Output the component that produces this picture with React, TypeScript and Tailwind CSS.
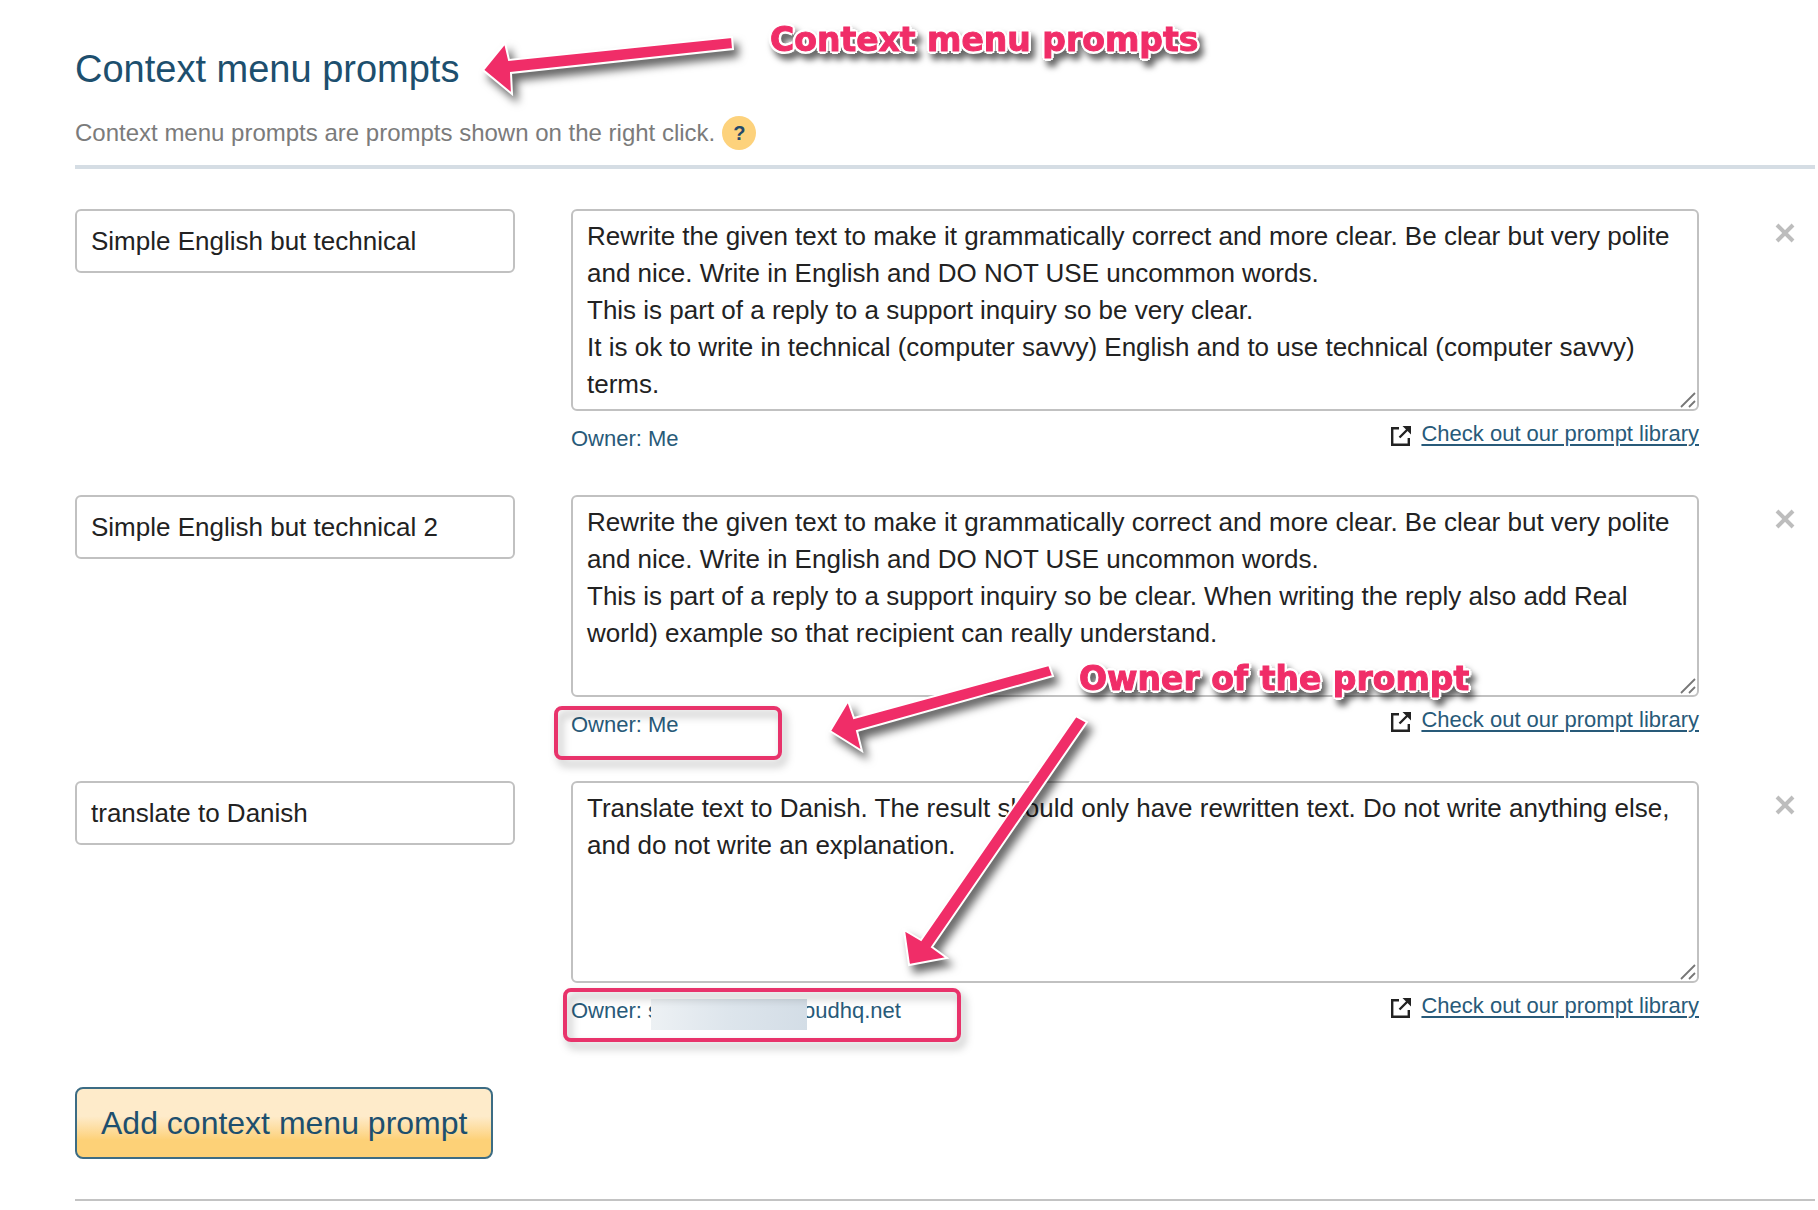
import { useState } from 'react';

type Prompt = {
  id: number;
  name: string;
  text: string;
  owner: string;
  highlight?: string;
  masked?: boolean;
};

const initialPrompts: Prompt[] = [
  {
    id: 1,
    name: 'Simple English but technical',
    text: 'Rewrite the given text to make it grammatically correct and more clear. Be clear but very polite and nice. Write in English and DO NOT USE uncommon words.\nThis is part of a reply to a support inquiry so be very clear.\nIt is ok to write in technical (computer savvy) English and to use technical (computer savvy) terms.',
    owner: 'Me',
  },
  {
    id: 2,
    name: 'Simple English but technical 2',
    text: 'Rewrite the given text to make it grammatically correct and more clear. Be clear but very polite and nice. Write in English and DO NOT USE uncommon words.\nThis is part of a reply to a support inquiry so be clear. When writing the reply also add Real world) example so that recipient can really understand.',
    owner: 'Me',
    highlight: '-left-[17px] -top-[3px] h-[54px] w-[228px]',
  },
  {
    id: 3,
    name: 'translate to Danish',
    text: 'Translate text to Danish. The result should only have rewritten text. Do not write anything else, and do not write an explanation.',
    owner: 'oudhq.net',
    highlight: '-left-2 -top-[7px] h-[54px] w-[398px]',
    masked: true,
  },
];

const arrows = [
  '483,70 505,43 509,60 732,37 733,49 511,73 512,94',
  '830,731 848,701 854,718 1049,665 1053,676 857,731 862,751',
  '909,965 904,930 921,940 1076,716 1087,722 932,947 947,958',
];

export default function App() {
  const [prompts, setPrompts] = useState(initialPrompts);

  const update = (id: number, patch: Partial<Prompt>) =>
    setPrompts((list) => list.map((item) => (item.id === id ? { ...item, ...patch } : item)));
  const remove = (id: number) => setPrompts((list) => list.filter((item) => item.id !== id));
  const add = () =>
    setPrompts((list) => [...list, { id: Date.now(), name: '', text: '', owner: 'Me' }]);

  return (
    <div className="relative min-h-screen overflow-hidden bg-white font-['Liberation_Sans',Arial,sans-serif] text-[#222]">
      <main className="pl-[75px] pr-[3px] pt-[44px]">
        <header className="border-b-4 border-[#d5dde4] pb-[15px]">
          <h1 className="text-[38px] leading-[50px] text-[#1d4f6e]">Context menu prompts</h1>
          <div className="mt-[22px] flex items-center gap-[7px] text-[#7b7b7b]">
            <p className="text-[24px] leading-[34px]">Context menu prompts are prompts shown on the right click.</p>
            <button aria-label="Help" className="size-[34px] rounded-full bg-[#fdd27c] text-[20px] font-bold leading-[34px] text-[#24496a]">?</button>
          </div>
        </header>

        <section className="mt-10 flex flex-col gap-10">
          {prompts.map((prompt) => (
            <PromptRow key={prompt.id} prompt={prompt} onChange={update} onRemove={remove} />
          ))}
        </section>

        <div className="mt-[57px] border-b-2 border-[#c3c3c3] pb-10">
          <button
            onClick={add}
            className="h-[72px] rounded-lg border-2 border-[#3c6c84] bg-linear-to-b from-[#feebca] from-40% to-[#fdd177] to-75% px-6 text-[32px] leading-[40px] text-[#1d4f6e]"
          >
            Add context menu prompt
          </button>
        </div>
      </main>

      <svg width="1818" height="1210" viewBox="0 0 1818 1210" className="pointer-events-none absolute left-0 top-0 drop-shadow-[5px_7px_4px_rgba(0,0,0,0.6)]">
        {arrows.map((points) => (
          <polygon key={points} points={points} fill="#f02d68" stroke="#fff" strokeWidth="2" />
        ))}
      </svg>
      <Callout className="left-[770px] top-[19px]">Context menu prompts</Callout>
      <Callout className="left-[1079px] top-[658px]">Owner of the prompt</Callout>
    </div>
  );
}

function PromptRow({ prompt, onChange, onRemove }: {
  prompt: Prompt;
  onChange: (id: number, patch: Partial<Prompt>) => void;
  onRemove: (id: number) => void;
}) {
  return (
    <div className="grid grid-cols-[440px_minmax(0,1fr)_96px] items-start">
      <input
        aria-label="Prompt name"
        value={prompt.name}
        onChange={(event) => onChange(prompt.id, { name: event.target.value })}
        className="h-16 w-full rounded-md border-2 border-[#c1c1c1] px-[14px] text-[26px]"
      />
      <div className="ml-14 mr-5">
        <div className="relative">
          <textarea
            aria-label="Prompt text"
            value={prompt.text}
            onChange={(event) => onChange(prompt.id, { text: event.target.value })}
            className="block h-[202px] w-full resize-none overflow-hidden rounded-md border-2 border-[#c1c1c1] px-[14px] py-[7px] text-[26px] leading-[37px]"
          />
          <svg viewBox="0 0 16 16" className="pointer-events-none absolute bottom-[3px] right-[3px] size-4" stroke="#777" strokeWidth="1.8">
            <path d="M1 15 15 1M9 15l6-6" />
          </svg>
        </div>
        <div className="flex items-start justify-between pt-[7px] text-[22px] leading-[32px] text-[#285a79]">
          <div className="relative mt-[5px]">
            {prompt.masked ? (
              <span className="flex">
                Owner: s
                <span className="relative -ml-2 -mr-[4px] mt-1 h-[31px] w-[156px] bg-linear-to-r from-[#edf1f4] via-[#dde5ec] to-[#d3dde6]" />
                {prompt.owner}
              </span>
            ) : (
              <span>Owner: {prompt.owner}</span>
            )}
            {prompt.highlight && (
              <span className={`pointer-events-none absolute rounded-lg border-4 border-[#e8336b] drop-shadow-[4px_6px_4px_rgba(0,0,0,0.3)] ${prompt.highlight}`} />
            )}
          </div>
          <a href="#library" className="flex items-center gap-[10px]">
            <svg viewBox="0 0 20 20" className="mt-1 size-5" fill="none" stroke="#222" strokeWidth="2.4">
              <path d="M8 2.2H1.2v16.6h16.6V12M8.5 11.5 17 3" />
              <path d="M11.5 0H20v8.5Z" fill="#222" stroke="none" />
            </svg>
            <span className="underline decoration-2 underline-offset-3">Check out our prompt library</span>
          </a>
        </div>
      </div>
      <button aria-label="Remove prompt" onClick={() => onRemove(prompt.id)} className="mr-5 mt-[14px] justify-self-end">
        <svg viewBox="0 0 20 20" className="size-5" stroke="#bdbdbd" strokeWidth="4">
          <path d="m2 2 16 16M18 2 2 18" />
        </svg>
      </button>
    </div>
  );
}

function Callout({ className, children }: { className: string; children: string }) {
  return (
    <span className={`pointer-events-none absolute whitespace-nowrap font-['DejaVu_Sans',sans-serif] text-[33px] font-black leading-[42px] text-[#f02d68] [-webkit-text-stroke:1px_#f02d68] [text-shadow:3px_0_#fff,-3px_0_#fff,0_3px_#fff,0_-3px_#fff,2px_2px_#fff,-2px_2px_#fff,2px_-2px_#fff,-2px_-2px_#fff] drop-shadow-[4px_6px_3px_rgba(0,0,0,0.6)] ${className}`}>
      {children}
    </span>
  );
}
